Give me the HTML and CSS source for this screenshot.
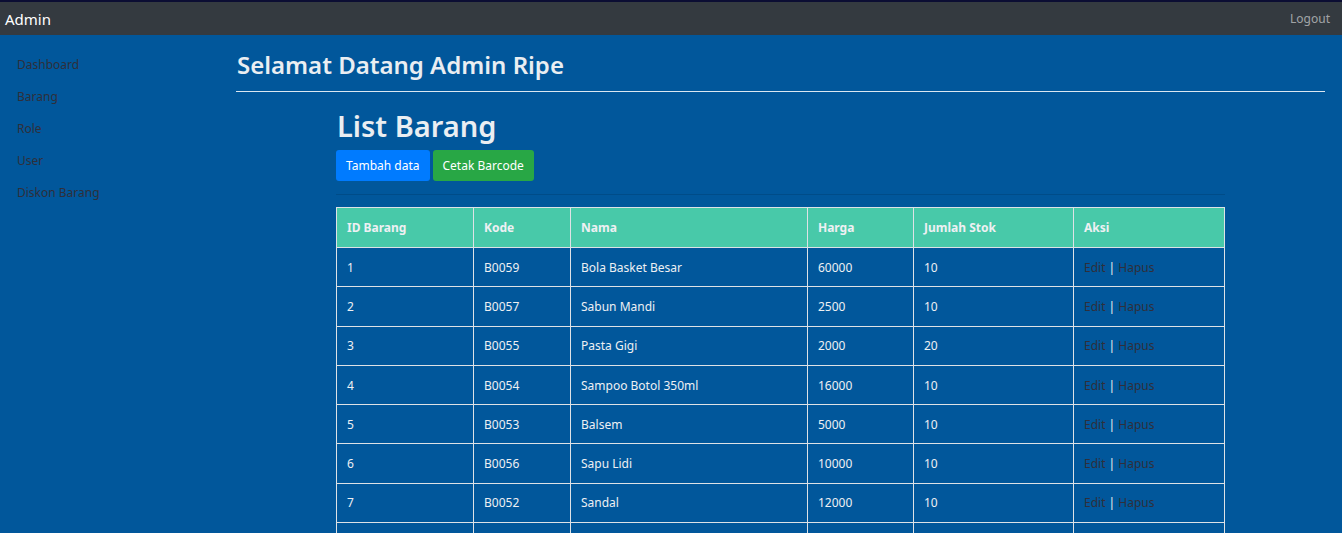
FILE: index.html
```html
<!DOCTYPE html>
<html lang="id">
<head>
<meta charset="utf-8">
<title>Admin - List Barang</title>
<link rel="stylesheet" href="styles.css">
</head>
<body>
<div class="topstrip"></div>
<nav class="navbar">
  <span class="brand">Admin</span>
  <a class="logout" href="#">Logout</a>
</nav>
<div class="layout">
  <aside class="sidebar">
    <a href="#">Dashboard</a>
    <a href="#">Barang</a>
    <a href="#">Role</a>
    <a href="#">User</a>
    <a href="#">Diskon Barang</a>
  </aside>
  <main class="main">
    <h2 class="welcome">Selamat Datang Admin Ripe</h2>
    <hr class="rule">
    <div class="container">
      <h1 class="title">List Barang</h1>
      <div class="actions">
        <a class="btn btn-primary" href="#">Tambah data</a>
        <a class="btn btn-success" href="#">Cetak Barcode</a>
      </div>
      <hr class="sep">
      <table class="data">
        <thead>
          <tr><th class="c1">ID Barang</th><th class="c2">Kode</th><th class="c3">Nama</th><th class="c4">Harga</th><th class="c5">Jumlah Stok</th><th class="c6">Aksi</th></tr>
        </thead>
        <tbody>
          <tr><td>1</td><td>B0059</td><td>Bola Basket Besar</td><td>60000</td><td>10</td><td><a href="#">Edit</a> | <a href="#">Hapus</a></td></tr>
          <tr><td>2</td><td>B0057</td><td>Sabun Mandi</td><td>2500</td><td>10</td><td><a href="#">Edit</a> | <a href="#">Hapus</a></td></tr>
          <tr><td>3</td><td>B0055</td><td>Pasta Gigi</td><td>2000</td><td>20</td><td><a href="#">Edit</a> | <a href="#">Hapus</a></td></tr>
          <tr><td>4</td><td>B0054</td><td>Sampoo Botol 350ml</td><td>16000</td><td>10</td><td><a href="#">Edit</a> | <a href="#">Hapus</a></td></tr>
          <tr><td>5</td><td>B0053</td><td>Balsem</td><td>5000</td><td>10</td><td><a href="#">Edit</a> | <a href="#">Hapus</a></td></tr>
          <tr><td>6</td><td>B0056</td><td>Sapu Lidi</td><td>10000</td><td>10</td><td><a href="#">Edit</a> | <a href="#">Hapus</a></td></tr>
          <tr><td>7</td><td>B0052</td><td>Sandal</td><td>12000</td><td>10</td><td><a href="#">Edit</a> | <a href="#">Hapus</a></td></tr>
          <tr><td>8</td><td>B0051</td><td>Sikat Gigi</td><td>8000</td><td>10</td><td><a href="#">Edit</a> | <a href="#">Hapus</a></td></tr>
        </tbody>
      </table>
    </div>
  </main>
</div>
</body>
</html>
```

FILE: styles.css
```css
html, body {
  margin: 0;
  padding: 0;
  overflow: hidden;
}
body {
  background: #01579b;
  font-family: "Noto Sans", "Open Sans", sans-serif;
  font-size: 12px;
  color: #eef0f3;
}
.topstrip {
  height: 2px;
  background: #0b0d33;
}
.navbar {
  height: 33px;
  background: #343a40;
  display: flex;
  align-items: center;
  justify-content: space-between;
  padding: 0 12px 0 5px;
}
.brand {
  color: #ffffff;
  font-size: 15px;
}
.logout {
  color: rgba(255, 255, 255, 0.55);
  font-size: 12px;
  text-decoration: none;
}
.layout {
  display: flex;
}
.sidebar {
  flex: 0 0 219px;
  padding: 14px 0 0 17px;
  display: flex;
  flex-direction: column;
}
.sidebar a {
  color: #2f2f3a;
  text-decoration: none;
  font-size: 12px;
  line-height: 32px;
}
.main {
  flex: 1;
  margin-right: 18px;
}
.welcome {
  margin: 15px 0 0 1px;
  font-size: 24px;
  font-weight: 600;
  line-height: 30px;
  color: #eaeef2;
}
.rule {
  margin: 11px 0 0;
  border: 0;
  border-top: 1px solid #dbe7f1;
}
.container {
  margin: 0 100px;
}
.title {
  margin: 14px 0 0 1px;
  font-size: 29px;
  font-weight: 600;
  line-height: 40px;
  color: #eaeef2;
}
.actions {
  display: flex;
  gap: 3px;
  margin-top: 4px;
}
.btn {
  display: inline-block;
  height: 31px;
  line-height: 31px;
  padding: 0 10px;
  border-radius: 3px;
  color: #ffffff;
  font-size: 12px;
  text-decoration: none;
}
.btn-primary {
  background: #007bff;
}
.btn-success {
  background: #28a745;
}
.sep {
  margin: 13px 0 12px;
  border: 0;
  border-top: 1px solid rgba(0, 0, 0, 0.12);
}
.data {
  width: 888px;
  border-collapse: collapse;
  table-layout: fixed;
}
.data th, .data td {
  border: 1px solid #dee2e6;
  padding: 0 10px;
  text-align: left;
  height: 38.3px;
  color: #eef0f3;
  font-size: 12px;
}
.data th {
  background: #48c9a9;
  font-weight: 700;
  height: 39px;
}
.data td a {
  color: #2f2f3a;
  text-decoration: none;
}
.c1 { width: 116px; }
.c2 { width: 76px; }
.c3 { width: 216px; }
.c4 { width: 85px; }
.c5 { width: 139px; }
.c6 { width: 130px; }
```
